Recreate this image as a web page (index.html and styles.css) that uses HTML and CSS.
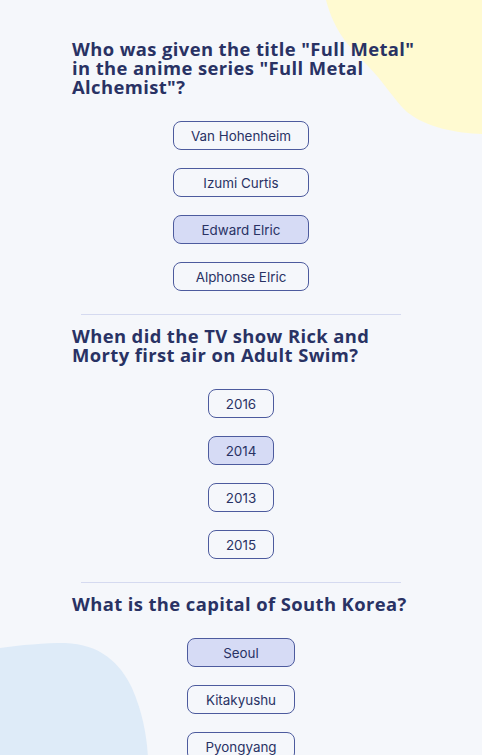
FILE: index.html
```html
<!DOCTYPE html>
<html>
<head>
<meta charset="utf-8">
<link rel="stylesheet" href="styles.css">
</head>
<body>
<svg class="blob blob-yellow" width="160" height="135" viewBox="0 0 160 135">
  <path d="M4 0 C12 30 25 45 45 65 C62 82 72 100 85 112 C105 128 135 133 160 134 L160 0 Z" fill="#FFFAD1"/>
</svg>
<svg class="blob blob-blue" width="150" height="115" viewBox="0 0 150 115">
  <path d="M0 5 C20 2 45 0 65 0 C100 1 120 20 132 45 C143 70 147 95 148 115 L0 115 Z" fill="#DEEBF8"/>
</svg>
<main class="quiz">
  <section class="question">
    <h2 class="q-title">Who was given the title "Full Metal" in the anime series "Full Metal Alchemist"?</h2>
    <div class="answers">
      <button class="answer">Van Hohenheim</button>
      <button class="answer">Izumi Curtis</button>
      <button class="answer selected">Edward Elric</button>
      <button class="answer">Alphonse Elric</button>
    </div>
  </section>
  <section class="question">
    <h2 class="q-title">When did the TV show Rick and Morty first air on Adult Swim?</h2>
    <div class="answers">
      <button class="answer">2016</button>
      <button class="answer selected">2014</button>
      <button class="answer">2013</button>
      <button class="answer">2015</button>
    </div>
  </section>
  <section class="question">
    <h2 class="q-title">What is the capital of South Korea?</h2>
    <div class="answers">
      <button class="answer selected">Seoul</button>
      <button class="answer">Kitakyushu</button>
      <button class="answer">Pyongyang</button>
      <button class="answer">Busan</button>
    </div>
  </section>
</main>
</body>
</html>
```
FILE: styles.css
```css
html, body {
  margin: 0;
  padding: 0;
}
body {
  background: #F5F7FB;
  color: #293264;
  font-family: "Open Sans", sans-serif;
  position: relative;
  height: 755px;
  overflow: hidden;
}
.blob {
  position: absolute;
  z-index: 0;
}
.blob-yellow {
  top: 0;
  right: 0;
}
.blob-blue {
  left: 0;
  top: 643px;
}
.quiz {
  position: relative;
  z-index: 1;
  width: 338px;
  margin: 0 auto;
  padding-top: 39px;
  display: flex;
  flex-direction: column;
}
.question {
  display: flex;
  flex-direction: column;
  align-items: center;
  padding-bottom: 24px;
  margin-bottom: 11px;
  position: relative;
}
.question::after {
  content: "";
  position: absolute;
  left: 9px;
  right: 9px;
  bottom: 0;
  height: 1.5px;
  background: #D5DAF0;
}
.q-title {
  align-self: stretch;
  margin: 0 -14px 25px 0;
  font-size: 18.4px;
  font-weight: 700;
  line-height: 19px;
  letter-spacing: 0.4px;
}
.answers {
  display: inline-flex;
  flex-direction: column;
  gap: 18px;
}
.answer {
  font-family: Inter, sans-serif;
  font-size: 13.4px;
  color: #293264;
  background: transparent;
  border: 1px solid #4D5B9E;
  border-radius: 8px;
  height: 29px;
  padding: 0 17px;
  cursor: pointer;
}
.answer.selected {
  background: #D6DBF5;
}
```
